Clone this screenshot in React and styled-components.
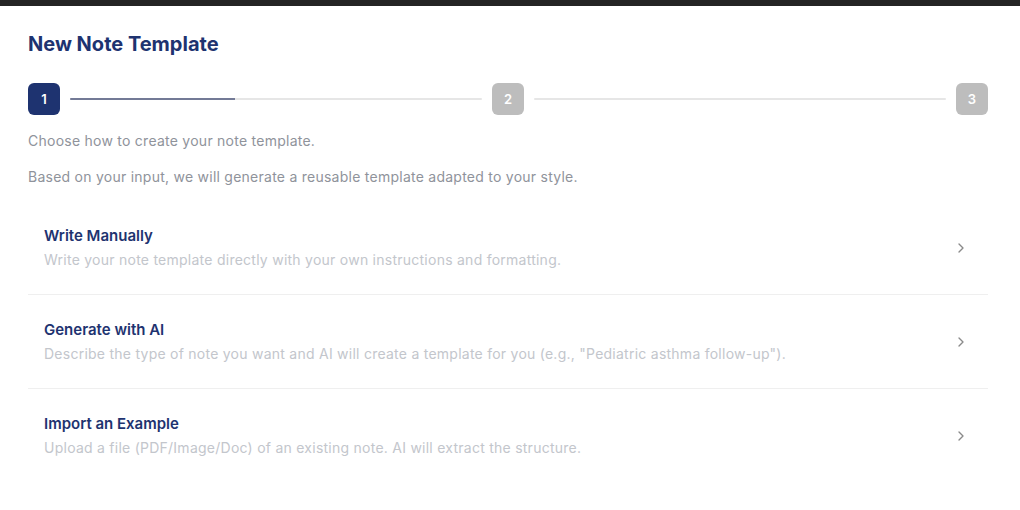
import styled, { createGlobalStyle } from "styled-components";
import { ChevronRight } from "lucide-react";

const GlobalStyle = createGlobalStyle`
  body {
    margin: 0;
    background: #fff;
    font-family: Inter, "Noto Sans", sans-serif;
  }
`;

const options = [
  {
    title: "Write Manually",
    desc: "Write your note template directly with your own instructions and formatting.",
  },
  {
    title: "Generate with AI",
    desc: 'Describe the type of note you want and AI will create a template for you (e.g., "Pediatric asthma follow-up").',
  },
  {
    title: "Import an Example",
    desc: "Upload a file (PDF/Image/Doc) of an existing note. AI will extract the structure.",
  },
];

export default function App() {
  return (
    <>
      <GlobalStyle />
      <TopBar />
      <Page>
        <Title>New Note Template</Title>
        <Stepper>
          <Step active>1</Step>
          <Track>
            <Fill style={{ width: "40%" }} />
          </Track>
          <Step>2</Step>
          <Track />
          <Step>3</Step>
        </Stepper>
        <Intro>Choose how to create your note template.</Intro>
        <Intro>Based on your input, we will generate a reusable template adapted to your style.</Intro>
        <OptionList>
          {options.map((o) => (
            <Option key={o.title}>
              <OptionText>
                <OptionTitle>{o.title}</OptionTitle>
                <OptionDesc>{o.desc}</OptionDesc>
              </OptionText>
              <ChevronRight size={16} color="#8a8a8a" strokeWidth={2} />
            </Option>
          ))}
        </OptionList>
      </Page>
    </>
  );
}

const TopBar = styled.div`
  height: 6px;
  background: #242424;
`;

const Page = styled.div`
  padding: 23px 32px 0 28px;
`;

const Title = styled.h1`
  margin: 0;
  font-size: 20px;
  line-height: 28px;
  font-weight: 700;
  color: #1e3370;
  position: relative;
  top: 1px;
`;

const Stepper = styled.div`
  display: flex;
  align-items: center;
  gap: 10px;
  margin-top: 26px;
`;

const Step = styled.div`
  width: 32px;
  height: 32px;
  flex: none;
  border-radius: 6px;
  display: flex;
  align-items: center;
  justify-content: center;
  font-size: 13px;
  font-weight: 600;
  color: #fff;
  background: ${(p) => (p.active ? "#1e3370" : "#bdbdbd")};
`;

const Track = styled.div`
  flex: 1;
  height: 2px;
  background: #e6e6e6;
  border-radius: 1px;
  overflow: hidden;
`;

const Fill = styled.div`
  height: 100%;
  background: #737a96;
`;

const Intro = styled.p`
  margin: 16px 0 0;
  font-size: 14px;
  line-height: 20px;
  color: #8f939b;
  letter-spacing: 0.25px;
`;

const OptionList = styled.div`
  margin-top: 14px;
  display: flex;
  flex-direction: column;
`;

const Option = styled.div`
  display: flex;
  align-items: center;
  justify-content: space-between;
  padding: 25px 19px 24px 16px;
  border-bottom: 1px solid #efefef;
  cursor: pointer;

  &:last-child {
    border-bottom: none;
  }
`;

const OptionText = styled.div`
  display: flex;
  flex-direction: column;
  gap: 4px;
`;

const OptionTitle = styled.div`
  font-size: 15px;
  line-height: 20px;
  font-weight: 600;
  color: #1e3370;
`;

const OptionDesc = styled.div`
  font-size: 14px;
  line-height: 20px;
  color: #c3c6cc;
  letter-spacing: 0.25px;
`;
